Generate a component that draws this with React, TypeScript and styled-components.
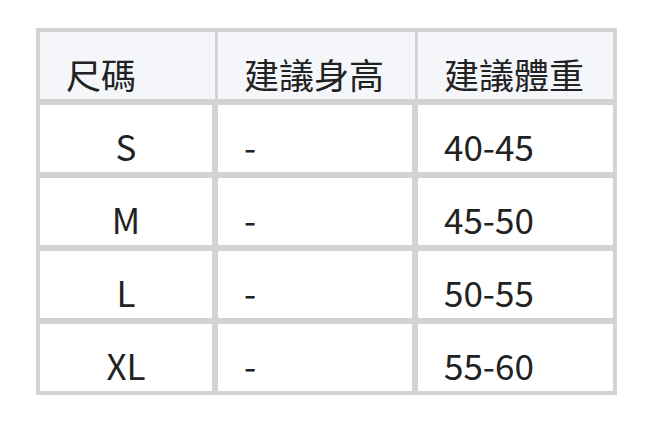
import React from 'react';
import styled, { createGlobalStyle } from 'styled-components';

const GlobalStyle = createGlobalStyle`
    body {
        margin: 0;
        background: #ffffff;
        font-family: "Noto Sans CJK TC", "Noto Sans", sans-serif;
    }
`;

const Wrapper = styled.div`
    padding: 28px 36px;
`;

const SizeTable = styled.table`
    width: 581px;
    table-layout: fixed;
    border-collapse: separate;
    border-spacing: 0;
    border: 4px solid #d3d3d3;
    background: #d3d3d3;
    color: #222222;
    font-size: 35px;
    line-height: 42px;
`;

const HeadCell = styled.th<{ $width: number; $last?: boolean }>`
    box-sizing: border-box;
    width: ${(props) => props.$width}px;
    padding: 21px 0 4px 26px;
    background: #f5f6fa;
    font-weight: 400;
    text-align: left;
    vertical-align: bottom;
    border-right: ${(props) => (props.$last ? '0' : '3px solid #d3d3d3')};
`;

const Cell = styled.td<{ $center?: boolean; $last?: boolean }>`
    padding: 20px 0 5px ${(props) => (props.$center ? '0' : '26px')};
    background: #ffffff;
    text-align: ${(props) => (props.$center ? 'center' : 'left')};
    vertical-align: bottom;
    border-top: 6px solid #d3d3d3;
    border-right: ${(props) => (props.$last ? '0' : '6px solid #d3d3d3')};
`;

const rows = [
    { size: 'S', height: '-', weight: '40-45' },
    { size: 'M', height: '-', weight: '45-50' },
    { size: 'L', height: '-', weight: '50-55' },
    { size: 'XL', height: '-', weight: '55-60' },
];

export default function App() {
    return (
        <>
            <GlobalStyle />
            <Wrapper>
                <SizeTable>
                    <thead>
                        <tr>
                            <HeadCell $width={178}>尺碼</HeadCell>
                            <HeadCell $width={200}>建議身高</HeadCell>
                            <HeadCell $width={195} $last>建議體重</HeadCell>
                        </tr>
                    </thead>
                    <tbody>
                        {rows.map((row) => (
                            <tr key={row.size}>
                                <Cell $center>{row.size}</Cell>
                                <Cell>{row.height}</Cell>
                                <Cell $last>{row.weight}</Cell>
                            </tr>
                        ))}
                    </tbody>
                </SizeTable>
            </Wrapper>
        </>
    );
}
